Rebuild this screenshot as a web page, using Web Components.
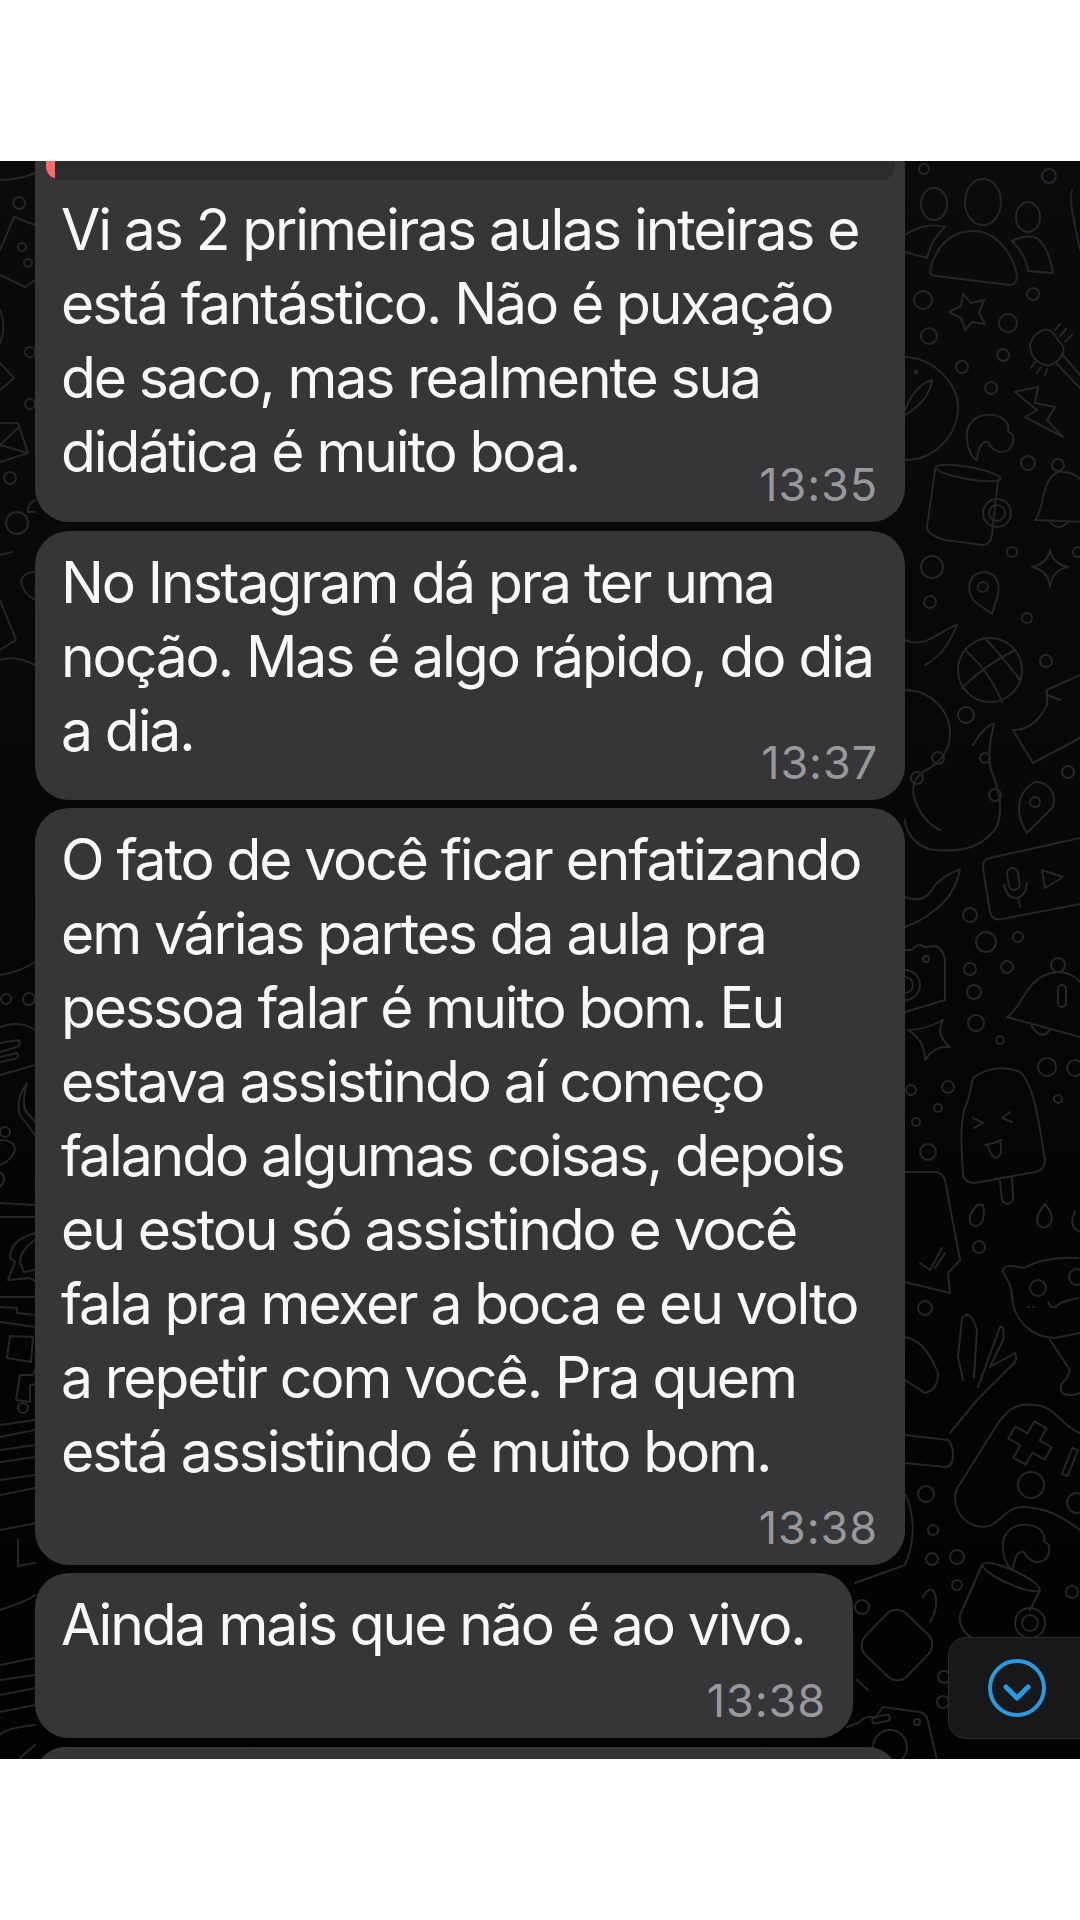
<!DOCTYPE html>
<html lang="pt">
<head>
<meta charset="utf-8">
<title>Conversa</title>
<style>
  html, body { margin: 0; background: #fff; }
</style>
</head>
<body>
<chat-screen>
  <chat-bubble time="13:35" inline quoted>Vi as 2 primeiras aulas inteiras e<br>está fantástico. Não é puxação<br>de saco, mas realmente sua<br>didática é muito boa.</chat-bubble>
  <chat-bubble time="13:37" inline>No Instagram dá pra ter uma<br>noção. Mas é algo rápido, do dia<br>a dia.</chat-bubble>
  <chat-bubble time="13:38">O fato de você ficar enfatizando<br>em várias partes da aula pra<br>pessoa falar é muito bom. Eu<br>estava assistindo aí começo<br>falando algumas coisas, depois<br>eu estou só assistindo e você<br>fala pra mexer a boca e eu volto<br>a repetir com você. Pra quem<br>está assistindo é muito bom.</chat-bubble>
  <chat-bubble time="13:38" short>Ainda mais que não é ao vivo.</chat-bubble>
  <chat-bubble clipped></chat-bubble>
</chat-screen>

<script>
class ChatDoodles extends HTMLElement {
  connectedCallback() {
    this.attachShadow({ mode: 'open' });
    // coordinates are the page's own, hence the viewBox offset
    this.shadowRoot.innerHTML = `
      <style>
        :host { position: absolute; inset: 0; display: block; }
        svg { display: block; width: 100%; height: 100%; }
        g { fill: none; stroke: #262629; stroke-width: 2; stroke-linecap: round; stroke-linejoin: round; }
      </style>
      <svg viewBox="0 161 1080 1598" xmlns="http://www.w3.org/2000/svg">
        <defs>
          <path id="croissant" d="M967 440C965 425 975 413 992 415C1005 416 1010 425 1008 432C1015 432 1015 445 1008 450C1000 455 992 450 988 442C982 440 978 448 977 460C972 458 968 450 967 440Z"/>
        </defs>
        <g>
          <!-- right column, top -->
          <circle cx="924" cy="169" r="5"/><circle cx="1049" cy="176" r="7"/>
          <ellipse cx="983" cy="202" rx="18" ry="23"/><ellipse cx="934" cy="204" rx="13" ry="16"/><ellipse cx="1028" cy="217" rx="12" ry="15"/>
          <path d="M930 272C934 248 950 231 973 231C996 231 1012 252 1017 275Q1017 285 1010 285L936 276Q930 275 930 272Z"/>
          <path d="M905 252L927 258Q932 238 945 227Q925 222 905 235"/>
          <path d="M1012 241Q1025 234 1037 238Q1050 250 1053 273L1028 271Q1026 255 1012 241"/>
          <path d="M1072 190Q1070 196 1072 210L1080 250"/>
          <path d="M963 294L971 303L984 300L979 313L985 324L972 322L965 330L961 318L949 312L961 306Z"/>
          <circle cx="923" cy="300" r="9"/><circle cx="1008" cy="323" r="9"/><circle cx="1033" cy="294" r="6"/><circle cx="929" cy="336" r="8"/><circle cx="1003" cy="355" r="6"/><circle cx="962" cy="367" r="6"/><circle cx="991" cy="388" r="6"/>
          <path d="M1030 345C1032 335 1045 325 1052 332L1062 345C1068 352 1055 368 1045 365Q1030 360 1030 345Z"/>
          <path d="M1056 363L1080 388M1062 354L1080 375M1055 330L1060 324M1060 336L1066 329M1065 342L1072 335M1035 362L1031 368M1041 367L1037 373M1047 369L1045 375"/>
          <path d="M905 357C935 358 958 385 958 407C958 435 935 460 905 460"/>
          <path d="M905 410Q915 385 932 380Q930 400 905 415"/><circle cx="916" cy="372" r="1.5"/>
          <path d="M1015 392L1038 387L1035 403L1055 407L1047 420L1063 437L1025 417L1037 410Z"/>
          <use href="#croissant"/>
          <ellipse cx="968" cy="473" rx="33" ry="6" transform="rotate(10 968 473)"/>
          <path d="M935 470L927 527Q927 535 945 540L983 545Q990 545 992 535L998 480"/>
          <circle cx="997" cy="513" r="14"/><circle cx="997" cy="513" r="8"/>
          <circle cx="1058" cy="465" r="6"/>
          <path d="M1035 520C1045 510 1040 480 1058 472C1075 470 1085 480 1090 500M1035 520L1085 522M1050 522Q1058 532 1068 522"/>
          <circle cx="1028" cy="463" r="7"/><circle cx="1012" cy="552" r="5"/><circle cx="932" cy="567" r="11"/><circle cx="930" cy="602" r="6"/><circle cx="1027" cy="618" r="5"/><circle cx="1078" cy="552" r="5"/>
          <path d="M1050 550Q1052 563 1068 567Q1052 570 1050 587Q1048 570 1032 567Q1048 563 1050 550Z"/>
          <path d="M983 572C1000 572 1000 590 997 598L992 614L975 602C965 590 968 574 983 572Z"/><circle cx="983" cy="587" r="5"/>
          <path d="M905 640C925 650 940 630 957 625Q945 655 925 665"/>
          <!-- right column, middle -->
          <circle cx="990" cy="670" r="32"/>
          <path d="M965 650Q990 672 1002 702M1015 650Q985 665 962 688M985 638Q1005 660 1020 680"/>
          <circle cx="1046" cy="661" r="6"/><circle cx="966" cy="715" r="8"/><circle cx="1068" cy="772" r="6"/>
          <path d="M1013 730Q1035 730 1047 705L1047 690L1080 675M1013 730L1033 763L1080 738M1047 695L1060 700"/>
          <path d="M905 690C930 690 950 710 950 733C950 750 942 760 930 768C915 775 910 785 915 800C920 815 930 825 940 830"/>
          <path d="M973 745Q985 725 994 724Q985 760 993 775C1003 800 1003 825 990 835C975 850 955 852 935 850C915 848 905 830 905 820"/>
          <circle cx="938" cy="758" r="6"/><circle cx="917" cy="778" r="6"/><circle cx="985" cy="758" r="5"/><circle cx="995" cy="795" r="6"/>
          <path d="M1035 782C1052 782 1057 798 1052 808L1027 833C1018 820 1012 795 1035 782Z"/><circle cx="1035" cy="802" r="5"/>
          <path d="M1080 838L990 858Q982 860 983 868L990 912Q992 921 1002 919L1080 904"/>
          <rect x="1008" y="868" width="11" height="22" rx="5.5" transform="rotate(-8 1013 880)"/>
          <path d="M1004 885Q1008 900 1018 898Q1026 895 1027 883M1018 898L1020 907"/>
          <path d="M1042 870L1063 877L1045 888Z"/>
          <path d="M905 897Q925 905 935 885Q945 875 960 869Q955 895 935 910Q920 922 905 927"/>
          <circle cx="970" cy="915" r="7"/><circle cx="986" cy="942" r="10"/><circle cx="1018" cy="937" r="5"/><circle cx="970" cy="969" r="6"/><circle cx="1007" cy="967" r="6"/><circle cx="974" cy="992" r="7"/><circle cx="976" cy="1023" r="8"/><circle cx="1000" cy="1040" r="4"/><circle cx="1047" cy="1067" r="9"/>
          <path d="M905 950L912 950Q918 942 925 947L935 946Q943 948 945 960L945 1000L905 1012"/>
          <circle cx="905" cy="985" r="15"/><circle cx="905" cy="985" r="8"/><circle cx="926" cy="959" r="3"/>
          <circle cx="1058" cy="965" r="7"/>
          <path d="M1007 1017C1025 1005 1025 975 1058 972C1075 972 1085 985 1090 1000M1007 1017L1080 1037M1030 1023Q1040 1042 1050 1030"/>
          <rect x="1058" y="985" width="8" height="22" rx="4"/>
          <path d="M943 1020Q925 1030 908 1030Q925 1040 925 1060Q935 1045 950 1047Q935 1035 943 1020Z"/>
          <path d="M973 1078C985 1068 1005 1065 1020 1072C1035 1085 1040 1130 1045 1160Q1045 1170 1035 1172L975 1183Q965 1183 963 1175C962 1150 958 1120 968 1100L973 1078Z"/>
          <path d="M1000 1181L1002 1200Q1007 1208 1013 1200L1012 1178"/>
          <path d="M973 1118L983 1123L974 1128M1010 1112L1002 1118L1012 1122M985 1145Q995 1143 1002 1140M988 1146Q992 1160 998 1157Q1003 1154 1000 1141"/>
          <circle cx="911" cy="1090" r="5"/><circle cx="948" cy="1087" r="6"/><circle cx="938" cy="1108" r="4"/><circle cx="916" cy="1122" r="4"/><circle cx="1058" cy="1099" r="4"/><circle cx="1075" cy="1068" r="8"/>
          <circle cx="928" cy="1152" r="8"/><circle cx="979" cy="1247" r="6"/><circle cx="925" cy="1308" r="7"/>
          <path d="M977 1205Q968 1215 970 1222Q975 1230 982 1222Q985 1215 983 1205Z"/>
          <path d="M1045 1204Q1036 1215 1037 1222Q1042 1232 1050 1224Q1055 1216 1045 1204Z"/>
          <path d="M1075 1212Q1070 1220 1074 1228L1080 1232"/>
          <path d="M905 1172L935 1172Q942 1172 945 1180L960 1260L948 1273L950 1293L905 1282"/>
          <path d="M920 1263L930 1270L942 1248M935 1268L945 1253"/>
          <!-- cat -->
          <path d="M1003 1272Q1003 1265 1012 1266L1024 1268Q1045 1256 1078 1258M1003 1272Q1012 1285 1012 1297C1014 1320 1030 1337 1055 1338L1080 1333"/>
          <circle cx="1038" cy="1288" r="8"/><circle cx="1077" cy="1277" r="8"/>
          <path d="M1048 1302Q1052 1312 1060 1303Q1068 1300 1078 1298M1028 1307L1029 1307M1033 1307L1034 1307"/>
          <path d="M1050 1340Q1060 1355 1070 1370L1067 1378Q1058 1385 1062 1393Q1070 1397 1080 1393"/>
          <!-- plant -->
          <path d="M963 1380L958 1357L962 1318Q970 1308 977 1330L974 1377M978 1387L1000 1327Q1005 1325 1003 1340L990 1367L1015 1353Q1018 1360 1013 1364L977 1400L950 1433"/>
          <path d="M905 1337Q925 1340 938 1373Q938 1390 925 1393L905 1380"/>
          <path d="M905 1435L948 1440Q953 1445 953 1455Q953 1467 945 1467L905 1463"/>
          <!-- gamepad -->
          <path d="M1080 1433C1060 1425 1055 1405 1033 1405C1015 1402 1005 1412 995 1428L958 1487C950 1500 958 1525 983 1527C1000 1527 1005 1505 1025 1507C1045 1508 1060 1515 1080 1530"/>
          <path transform="translate(1030 1443) rotate(30)" d="M-7 -21H7V-7H21V7H7V21H-7V7H-21V-7H-7Z"/>
          <circle cx="1031" cy="1485" r="13"/>
          <rect x="1067" y="1448" width="6" height="28" transform="rotate(22 1070 1462)"/>
          <circle cx="1077" cy="1503" r="10"/>
          <circle cx="926" cy="1494" r="8"/><circle cx="933" cy="1530" r="5"/><circle cx="932" cy="1559" r="6"/><circle cx="957" cy="1557" r="7"/><circle cx="957" cy="1585" r="5"/><circle cx="1072" cy="1592" r="6"/>
          <use href="#croissant" transform="translate(36 1110)"/>
          <ellipse cx="1011" cy="1577" rx="31" ry="7" transform="rotate(24 1011 1577)"/>
          <path d="M982 1565L960 1615Q958 1630 975 1640M1040 1590L1030 1610"/>
          <circle cx="1030" cy="1623" r="15"/><circle cx="1030" cy="1623" r="8"/>
          <path d="M906 1495Q920 1530 905 1565L855 1583"/>
          <rect x="868" y="1616" width="58" height="58" rx="14" transform="rotate(44 897 1645)"/>
          <path d="M923 1597Q930 1585 934 1592Q940 1605 930 1622M857 1680L868 1690"/>
          <circle cx="862" cy="1607" r="7"/><circle cx="943" cy="1702" r="6"/><circle cx="944" cy="1677" r="6"/>
          <path d="M847 1727L860 1722Q865 1715 875 1718L883 1707L920 1712Q927 1714 928 1722L937 1760"/>
          <circle cx="890" cy="1747" r="17"/><circle cx="917" cy="1722" r="3"/>
          <rect x="872" y="1716" width="18" height="6" rx="3" transform="rotate(-12 881 1719)"/>
          <!-- left strip -->
          <path d="M0 180Q20 180 35 173"/>
          <circle cx="19" cy="203" r="6"/><path d="M0 250L14 217L35 225M0 275L25 287L35 280"/><circle cx="22" cy="247" r="4"/><circle cx="28" cy="263" r="4"/>
          <path d="M0 310Q7 327 0 343"/><circle cx="30" cy="352" r="5"/>
          <path d="M0 363L14 378L0 390"/><circle cx="30" cy="404" r="5"/>
          <path d="M0 423H18L28 453L0 462M0 445L18 428M0 445L28 453"/>
          <circle cx="10" cy="478" r="6"/><circle cx="17" cy="523" r="11"/>
          <path d="M35 500Q27 505 28 512L35 512"/><path d="M0 555L12 552"/>
          <path d="M35 572Q25 572 21 580Q22 593 35 600M40 572L35 590"/>
          <path d="M0 600L16 640L0 650"/><path d="M0 660Q15 655 35 665"/>
          <path d="M0 975Q20 972 35 962"/>
          <circle cx="6" cy="999" r="5"/><circle cx="29" cy="999" r="6"/>
          <path d="M0 1027Q20 1020 35 1030M0 1043L18 1040Q22 1044 17 1047L0 1052M0 1057L17 1053Q20 1056 15 1059L0 1062M0 1075L35 1065"/>
          <path d="M27 1083Q15 1100 20 1115L35 1135M27 1083Q22 1100 25 1110L35 1122"/>
          <circle cx="5" cy="1132" r="5"/>
          <path d="M0 1140Q15 1140 15 1150Q12 1160 0 1165M0 1172Q8 1178 0 1187M0 1203L35 1205M0 1217L35 1217"/>
          <path d="M35 1233Q10 1240 10 1258L15 1262L8 1280L30 1278L35 1281M35 1240Q20 1250 20 1262L24 1272L35 1270"/>
          <path d="M0 1297H35M0 1307L17 1308V1313L35 1315M0 1322L35 1327"/>
          <path d="M10 1336L33 1337L31 1362L7 1358Z"/>
          <path d="M40 1355L33 1375H20L16 1400L30 1402V1385L52 1382"/>
          <circle cx="23" cy="1408" r="5"/>
          <path d="M0 1425L35 1420M0 1437L35 1430M0 1450L35 1445M0 1462L35 1457M0 1480L35 1475M0 1495L35 1488"/>
          <path d="M0 1530L130 1505"/>
          <!-- strip of the fourth bubble and below -->
          <path d="M0 1610Q30 1600 35 1595M18 1540V1566L35 1563M0 1665L35 1658M0 1680L35 1675M0 1695L35 1688M0 1712L35 1705M0 1735Q5 1728 35 1725M20 1758L35 1745"/>
        </g>
      </svg>
    `;
  }
}

class ChatBubble extends HTMLElement {
  connectedCallback() {
    const time = this.getAttribute('time');
    this.attachShadow({ mode: 'open' });
    this.shadowRoot.innerHTML = `
      <style>
        :host {
          display: block;
          position: relative;
          width: 870px;
          margin-left: 35px;
          box-sizing: border-box;
          padding: 15px 26px 15px;
          background: #363638;
          border-radius: 34px;
          color: #f8f8f8;
          font: 400 57px/74px Inter, "Liberation Sans", sans-serif;
          letter-spacing: -2.1px;
          white-space: nowrap;
        }
        :host([short]) { width: 818px; }
        :host([quoted]) { border-radius: 0 0 34px 34px; padding-top: 32px; margin-bottom: 1px; }
        :host([clipped]) { width: 863px; height: 60px; padding: 0; margin-top: 1px; }
        .quote {
          display: none;
          position: absolute;
          top: 0;
          left: 11px;
          right: 10px;
          height: 19px;
          background: #2c2c2e;
          border-radius: 0 0 14px 14px;
          overflow: hidden;
        }
        :host([quoted]) .quote { display: block; }
        .quote::before {
          content: "";
          position: absolute;
          left: 0;
          top: -16px;
          bottom: 2px;
          width: 9px;
          background: #ff6b6b;
          border-radius: 0 0 0 12px;
        }
        .time {
          margin-top: 17px;
          margin-right: 1px;
          text-align: right;
          color: #98989d;
          font-size: 45px;
          line-height: 44px;
          letter-spacing: 0.9px;
        }
        :host([inline]) .time { margin-top: -27px; }
        :host([quoted]) .time { margin-top: -26px; }
        :host([clipped]) .time { display: none; }
      </style>
      <div class="quote"></div>
      <div class="text"><slot></slot></div>
      <div class="time">${time || ''}</div>
    `;
  }
}

class ScrollDownButton extends HTMLElement {
  connectedCallback() {
    this.attachShadow({ mode: 'open' });
    this.shadowRoot.innerHTML = `
      <style>
        :host {
          position: absolute;
          left: 948px;
          top: 1476px;
          width: 150px;
          height: 102px;
          box-sizing: border-box;
          background: #18181a;
          border: 1px solid #2c2c2e;
          border-radius: 18px;
          display: flex;
          align-items: center;
        }
        svg { display: block; margin-left: 38px; }
      </style>
      <svg width="60" height="60" viewBox="0 0 60 60" fill="none" stroke="#2a9ae0" stroke-width="4" stroke-linecap="round" stroke-linejoin="round">
        <circle cx="30" cy="30" r="27"/>
        <path d="M19 29L30 40L41 29" stroke-width="5"/>
      </svg>
    `;
  }
}

class ChatScreen extends HTMLElement {
  connectedCallback() {
    this.attachShadow({ mode: 'open' });
    this.shadowRoot.innerHTML = `
      <style>
        :host { display: block; width: 1080px; height: 1920px; background: #fff; padding-top: 161px; box-sizing: border-box; }
        .canvas {
          position: relative;
          height: 1598px;
          overflow: hidden;
          background: linear-gradient(#0b0b0e, #020203);
        }
        .list { position: relative; display: flex; flex-direction: column; gap: 8px; }
      </style>
      <div class="canvas">
        <chat-doodles></chat-doodles>
        <div class="list"><slot></slot></div>
        <scroll-down-button></scroll-down-button>
      </div>
    `;
  }
}

customElements.define('chat-doodles', ChatDoodles);
customElements.define('chat-bubble', ChatBubble);
customElements.define('scroll-down-button', ScrollDownButton);
customElements.define('chat-screen', ChatScreen);
</script>
</body>
</html>
